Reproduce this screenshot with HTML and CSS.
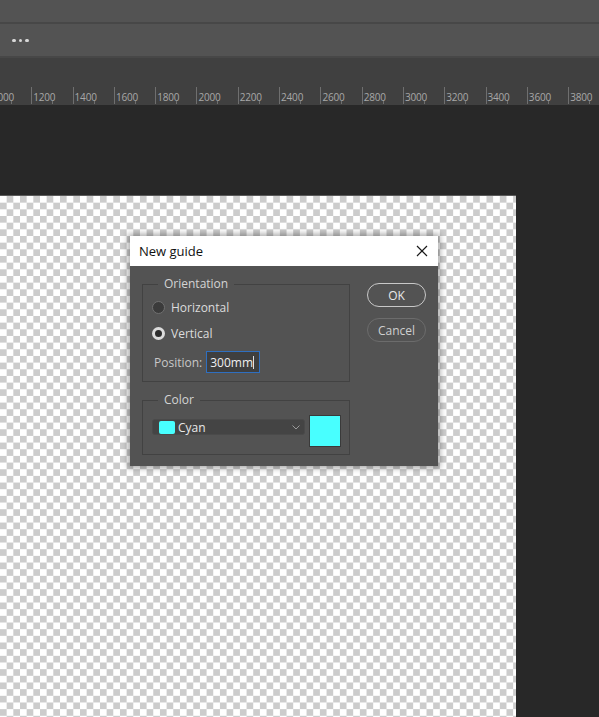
FILE: index.html
```html
<!DOCTYPE html>
<html>
<head>
<meta charset="utf-8">
<link rel="stylesheet" href="styles.css">
</head>
<body>
<div class="app">
  <div class="bar1"></div>
  <div class="bar2"><span class="dots"><i></i><i></i><i></i></span></div>
  <div class="rulerzone">
    <div class="ruler">
      <div class="seg"><span>1000</span></div>
      <div class="seg"><span>1200</span></div>
      <div class="seg"><span>1400</span></div>
      <div class="seg"><span>1600</span></div>
      <div class="seg"><span>1800</span></div>
      <div class="seg"><span>2000</span></div>
      <div class="seg"><span>2200</span></div>
      <div class="seg"><span>2400</span></div>
      <div class="seg"><span>2600</span></div>
      <div class="seg"><span>2800</span></div>
      <div class="seg"><span>3000</span></div>
      <div class="seg"><span>3200</span></div>
      <div class="seg"><span>3400</span></div>
      <div class="seg"><span>3600</span></div>
      <div class="seg"><span>3800</span></div>
    </div>
  </div>
  <div class="workspace">
    <div class="canvas"></div>
  </div>

  <div class="dialog">
    <div class="titlebar">
      <span class="title">New guide</span>
      <svg class="close" width="12" height="12" viewBox="0 0 12 12"><path d="M1 1 L11 11 M11 1 L1 11" stroke="#1a1a1a" stroke-width="1.2" fill="none"/></svg>
    </div>
    <div class="dbody">
      <div class="groups">
        <div class="group orient">
          <span class="legend">Orientation</span>
          <div class="row"><span class="radio"></span><span class="lbl">Horizontal</span></div>
          <div class="row"><span class="radio on"></span><span class="lbl">Vertical</span></div>
          <div class="posrow"><span class="plbl">Position:</span><span class="input">300mm<span class="caret"></span></span></div>
        </div>
        <div class="group color">
          <span class="legend">Color</span>
          <div class="colrow">
            <div class="select">
              <span class="chip"></span><span class="sval">Cyan</span>
              <svg class="chev" width="8" height="5" viewBox="0 0 8 5"><path d="M0.5 0.5 L4 4 L7.5 0.5" stroke="#9a9a9a" stroke-width="1" fill="none"/></svg>
            </div>
            <div class="swatch"></div>
          </div>
        </div>
      </div>
      <div class="buttons">
        <div class="btn ok">OK</div>
        <div class="btn cancel">Cancel</div>
      </div>
    </div>
  </div>
</div>
</body>
</html>
```
FILE: styles.css
```css
html, body {
  margin: 0;
  padding: 0;
  background: #282828;
}
.app {
  position: relative;
  width: 599px;
  height: 717px;
  overflow: hidden;
  font-family: "Open Sans", "Noto Sans", sans-serif;
}
.bar1 {
  height: 22px;
  background: #535353;
  border-bottom: 2px solid #474747;
}
.bar2 {
  height: 32px;
  background: #535353;
  border-bottom: 2px solid #474747;
  display: flex;
  align-items: center;
  padding-left: 12px;
}
.dots {
  display: flex;
  gap: 3px;
  margin-top: 1px;
}
.dots i {
  width: 3.5px;
  height: 3.5px;
  border-radius: 50%;
  background: #d8d8d8;
}
.rulerzone {
  height: 47px;
  background: #404040;
  display: flex;
  align-items: flex-end;
  overflow: hidden;
}
.ruler {
  height: 17px;
  margin-bottom: 1px;
  display: flex;
  margin-left: -10px;
  flex-shrink: 0;
}
.seg {
  position: relative;
  width: 41.3px;
  flex-shrink: 0;
  border-left: 1px solid #6f6f6f;
  box-sizing: border-box;
}
.seg::after {
  content: "";
  position: absolute;
  left: 20px;
  bottom: 0;
  width: 1px;
  height: 3px;
  background: #6f6f6f;
}
.seg span {
  position: absolute;
  left: 1px;
  top: 4px;
  font-size: 10px;
  line-height: 12px;
  color: #a8a8a8;
  letter-spacing: -0.2px;
}
.workspace {
  padding-top: 91px;
}
.canvas {
  width: 516px;
  height: 521px;
  background: conic-gradient(#cccccc 25%, #ffffff 0 50%, #cccccc 0 75%, #ffffff 0) 0 0 / 13.34px 13.34px;
  box-shadow: 0 -1px 0 #5a5a5a;
}
.dialog {
  position: absolute;
  left: 130px;
  top: 236px;
  width: 308px;
  height: 230px;
  background: #535353;
  box-shadow: 0 0 6px 2px rgba(0, 0, 0, 0.35);
}
.titlebar {
  height: 30px;
  background: #ffffff;
  display: flex;
  align-items: center;
  justify-content: space-between;
  padding: 0 10px 0 9px;
}
.title {
  font-size: 13px;
  color: #111;
}
.close {
  display: block;
}
.dbody {
  display: flex;
  padding: 18px 0 0 12px;
}
.groups {
  width: 208px;
}
.group {
  position: relative;
  border: 1px solid #424242;
  box-sizing: border-box;
}
.legend {
  position: absolute;
  top: -9px;
  left: 15px;
  padding: 0 6px;
  background: #535353;
  font-size: 12px;
  line-height: 16px;
  color: #d4d4d4;
}
.orient {
  height: 98px;
  padding: 9px 0 0 9px;
}
.row {
  height: 26px;
  display: flex;
  align-items: center;
}
.radio {
  width: 13px;
  height: 13px;
  border-radius: 50%;
  background: #3b3b3b;
  border: 1px solid #707070;
  margin-right: 6px;
  box-sizing: border-box;
}
.radio.on {
  background: #2d2d2d;
  border: 3.5px solid #dcdcdc;
}
.lbl {
  font-size: 12px;
  color: #dcdcdc;
}
.posrow {
  display: flex;
  align-items: center;
  margin-top: 5px;
  margin-left: 2px;
}
.plbl {
  font-size: 12px;
  color: #c8c8c8;
  margin-right: 4px;
}
.input {
  width: 54px;
  height: 22px;
  box-sizing: border-box;
  border: 1px solid #2f6fc0;
  background: #3f3f3f;
  font-size: 12px;
  color: #f0f0f0;
  display: flex;
  align-items: center;
  padding-left: 3px;
}
.caret {
  width: 1px;
  height: 13px;
  background: #e0e0e0;
}
.color {
  margin-top: 18px;
  height: 55px;
  padding: 14px 0 0 9px;
}
.colrow {
  display: flex;
  align-items: flex-start;
}
.select {
  width: 153px;
  height: 16px;
  margin-top: 4px;
  box-sizing: border-box;
  border: 1px solid #4a4a4a;
  border-radius: 3px;
  background: #444444;
  display: flex;
  align-items: center;
  padding-left: 6px;
}
.chip {
  width: 16px;
  height: 13px;
  background: #48ffff;
  border-radius: 2px;
  margin-right: 3px;
}
.sval {
  font-size: 12px;
  color: #e8e8e8;
}
.chev {
  margin-left: auto;
  margin-right: 4px;
}
.swatch {
  width: 32px;
  height: 32px;
  box-sizing: border-box;
  background: #48ffff;
  border: 1px solid #3a3a3a;
  margin-left: 4px;
}
.buttons {
  margin-left: 17px;
  margin-top: -1px;
  display: flex;
  flex-direction: column;
  gap: 11px;
}
.btn {
  width: 59px;
  height: 24px;
  box-sizing: border-box;
  border-radius: 12px;
  display: flex;
  align-items: center;
  justify-content: center;
  font-size: 12px;
}
.ok {
  border: 1.5px solid #c8c8c8;
  color: #e8e8e8;
}
.cancel {
  border: 1.5px solid #6c6c6c;
  color: #cfcfcf;
}
```
